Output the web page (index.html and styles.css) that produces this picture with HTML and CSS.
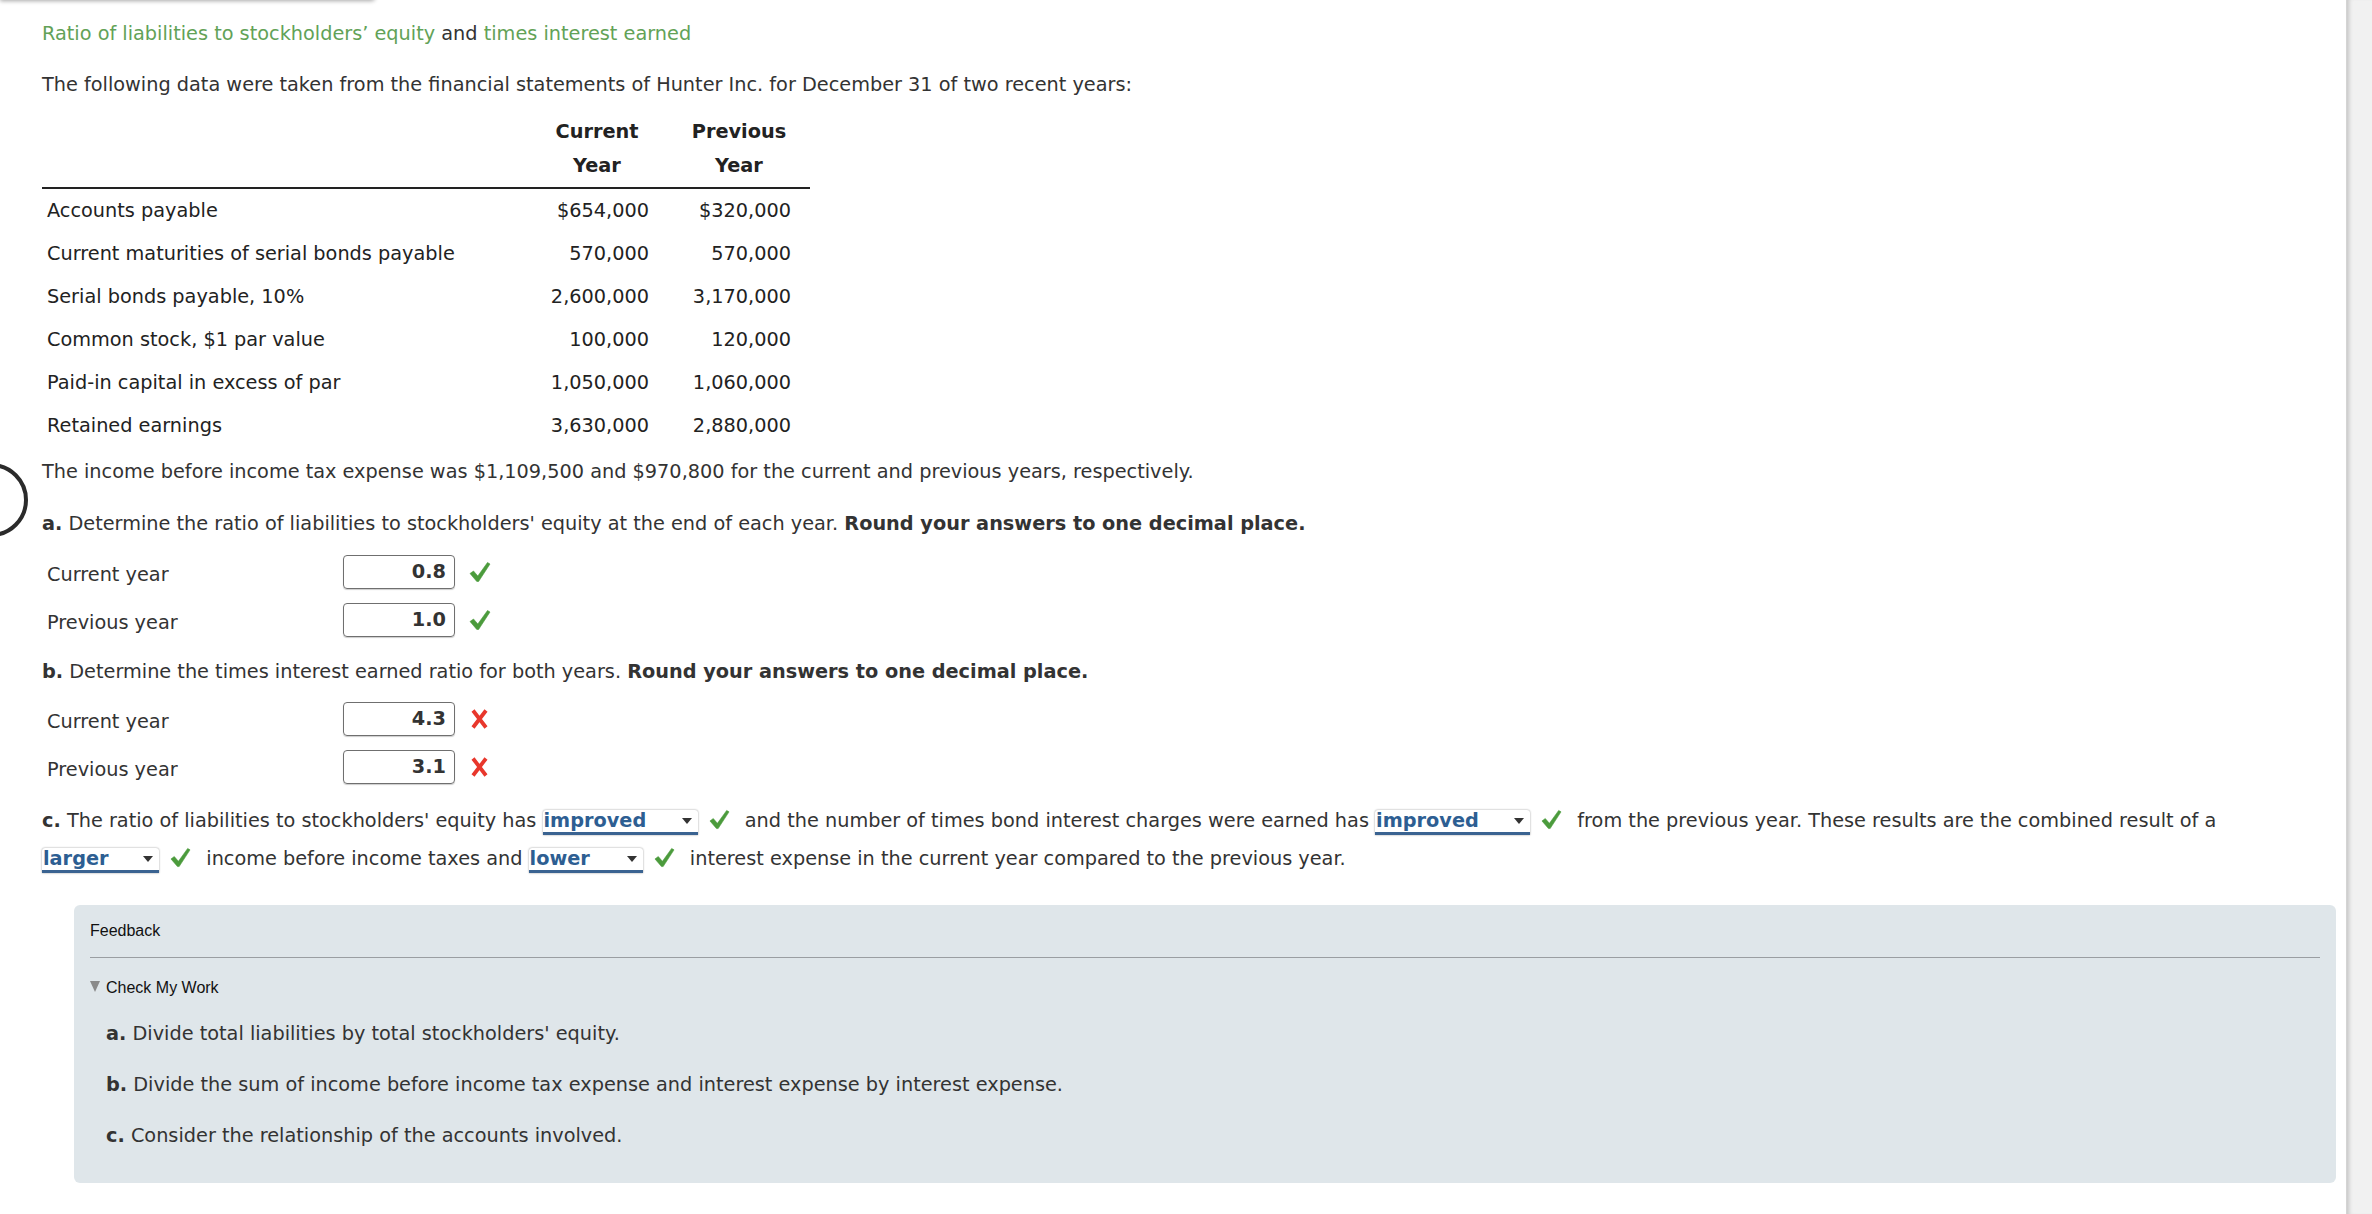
FILE: index.html
```html
<!DOCTYPE html>
<html>
<head>
<meta charset="utf-8">
<link rel="stylesheet" href="styles.css">
</head>
<body>
<div class="page">
  <main class="main">
    <div class="top-shadow"></div>
    <div class="side-circle"></div>
    <p class="title"><span class="green">Ratio of liabilities to stockholders’ equity</span> and <span class="green">times interest earned</span></p>
    <p class="intro">The following data were taken from the financial statements of Hunter Inc. for December 31 of two recent years:</p>
    <table class="data">
      <thead>
        <tr><th class="lbl"></th><th>Current<br>Year</th><th>Previous<br>Year</th></tr>
      </thead>
      <tbody>
        <tr><td class="lbl">Accounts payable</td><td>$654,000</td><td>$320,000</td></tr>
        <tr><td class="lbl">Current maturities of serial bonds payable</td><td>570,000</td><td>570,000</td></tr>
        <tr><td class="lbl">Serial bonds payable, 10%</td><td>2,600,000</td><td>3,170,000</td></tr>
        <tr><td class="lbl">Common stock, $1 par value</td><td>100,000</td><td>120,000</td></tr>
        <tr><td class="lbl">Paid-in capital in excess of par</td><td>1,050,000</td><td>1,060,000</td></tr>
        <tr><td class="lbl">Retained earnings</td><td>3,630,000</td><td>2,880,000</td></tr>
      </tbody>
    </table>
    <p class="income">The income before income tax expense was $1,109,500 and $970,800 for the current and previous years, respectively.</p>
    <p class="q qa"><b>a.</b> Determine the ratio of liabilities to stockholders' equity at the end of each year. <b>Round your answers to one decimal place.</b></p>
    <div class="answers">
      <div class="ans-row"><span class="ans-lbl">Current year</span><span class="ans-box">0.8</span><svg class="mark" viewBox="0 0 22 22"><path class="ok" d="M1 12.5 L4.5 10 L8.8 15 L18.5 1.5 L21 3 L9.6 20.5 L7.8 20.5 Z"/></svg></div>
      <div class="ans-row"><span class="ans-lbl">Previous year</span><span class="ans-box">1.0</span><svg class="mark" viewBox="0 0 22 22"><path class="ok" d="M1 12.5 L4.5 10 L8.8 15 L18.5 1.5 L21 3 L9.6 20.5 L7.8 20.5 Z"/></svg></div>
    </div>
    <p class="q qb"><b>b.</b> Determine the times interest earned ratio for both years. <b>Round your answers to one decimal place.</b></p>
    <div class="answers">
      <div class="ans-row"><span class="ans-lbl">Current year</span><span class="ans-box">4.3</span><svg class="mark" viewBox="0 0 22 22"><path class="bad" d="M4 2.5 L17 19.5 M17 2.5 L4 19.5"/></svg></div>
      <div class="ans-row"><span class="ans-lbl">Previous year</span><span class="ans-box">3.1</span><svg class="mark" viewBox="0 0 22 22"><path class="bad" d="M4 2.5 L17 19.5 M17 2.5 L4 19.5"/></svg></div>
    </div>
    <p class="qc"><b>c.</b> The ratio of liabilities to stockholders' equity has <span class="dd dd-w1"><span class="dd-val">improved</span><span class="dd-arrow"></span></span> <svg class="mark-in" viewBox="0 0 22 22"><path class="ok" d="M1 12.5 L4.5 10 L8.8 15 L18.5 1.5 L21 3 L9.6 20.5 L7.8 20.5 Z"/></svg> and the number of times bond interest charges were earned has <span class="dd dd-w1"><span class="dd-val">improved</span><span class="dd-arrow"></span></span> <svg class="mark-in" viewBox="0 0 22 22"><path class="ok" d="M1 12.5 L4.5 10 L8.8 15 L18.5 1.5 L21 3 L9.6 20.5 L7.8 20.5 Z"/></svg> from the previous year. These results are the combined result of a <span class="dd dd-w2"><span class="dd-val">larger</span><span class="dd-arrow"></span></span> <svg class="mark-in" viewBox="0 0 22 22"><path class="ok" d="M1 12.5 L4.5 10 L8.8 15 L18.5 1.5 L21 3 L9.6 20.5 L7.8 20.5 Z"/></svg> income before income taxes and <span class="dd dd-w3"><span class="dd-val">lower</span><span class="dd-arrow"></span></span> <svg class="mark-in" viewBox="0 0 22 22"><path class="ok" d="M1 12.5 L4.5 10 L8.8 15 L18.5 1.5 L21 3 L9.6 20.5 L7.8 20.5 Z"/></svg> interest expense in the current year compared to the previous year.</p>
    <section class="feedback">
      <div class="fb-head">Feedback</div>
      <div class="fb-toggle"><span class="tri"></span>Check My Work</div>
      <p class="hint"><b>a.</b> Divide total liabilities by total stockholders' equity.</p>
      <p class="hint"><b>b.</b> Divide the sum of income before income tax expense and interest expense by interest expense.</p>
      <p class="hint"><b>c.</b> Consider the relationship of the accounts involved.</p>
    </section>
  </main>
  <div class="scrollbar"></div>
</div>
</body>
</html>
```
FILE: styles.css
```css
html, body {
  margin: 0;
  padding: 0;
  background: #fff;
  height: 1214px;
  overflow: hidden;
}
body {
  font-family: "DejaVu Sans", Verdana, sans-serif;
  font-size: 19.3px;
  color: #333;
}
.page {
  display: flex;
  height: 1214px;
}
.main {
  position: relative;
  flex: 1;
  padding: 19px 10px 0 42px;
  overflow: hidden;
}
.scrollbar {
  width: 25px;
  background: #f1f1f1;
  border-left: 1px solid #d4d4d4;
  box-shadow: inset 5px 0 4px -3px rgba(0,0,0,0.18);
}
.top-shadow {
  position: absolute;
  left: 0;
  top: -20px;
  width: 375px;
  height: 20px;
  background: #fff;
  box-shadow: 0 1px 4px rgba(0,0,0,0.35);
  border-radius: 0 0 4px 0;
}
.side-circle {
  position: absolute;
  left: -46px;
  top: 463px;
  width: 66px;
  height: 66px;
  border: 4px solid #2b2b2b;
  border-radius: 50%;
}
p { margin: 0; }
.title {
  line-height: 30px;
  color: #333;
}
.green { color: #62a257; }
.intro {
  line-height: 30px;
  margin-top: 21px;
}
.data {
  border-collapse: collapse;
  margin-top: 15px;
  width: 768px;
  table-layout: fixed;
}
.data th {
  font-weight: bold;
  text-align: center;
  line-height: 34px;
  padding: 0 0 4px 0;
  border-bottom: 2px solid #222;
  width: 142px;
  color: #222;
}
.data th.lbl { width: auto; }
.data td {
  height: 43px;
  padding: 0 19px 0 0;
  text-align: right;
  vertical-align: middle;
  white-space: nowrap;
  color: #222;
}
.data td.lbl {
  text-align: left;
  padding: 0 0 0 5px;
}
.income {
  line-height: 30px;
  margin-top: 10px;
}
.q { line-height: 30px; }
.qa { margin-top: 22px; }
.qb { margin-top: 13px; }
.q b, .qc b { color: #333; }
.answers { margin-top: 9px; }
.qb + .answers { margin-top: 8px; }
.ans-row {
  display: flex;
  align-items: center;
  height: 48px;
}
.ans-lbl {
  width: 296px;
  padding-left: 5px;
  padding-top: 4px;
}
.ans-box {
  box-sizing: border-box;
  width: 112px;
  height: 34px;
  border: 1.5px solid #6f6f6f;
  border-radius: 4px;
  box-shadow: 0 1px 1px rgba(0,0,0,0.2);
  text-align: right;
  padding-right: 8px;
  font-weight: bold;
  line-height: 31px;
  color: #333;
}
.mark {
  width: 22px;
  height: 22px;
  margin-left: 14px;
}
.ok {
  fill: #4b9b3c;
  stroke: #4b9b3c;
  stroke-width: 0.6;
  stroke-linejoin: round;
}
.bad {
  fill: none;
  stroke: #e8372c;
  stroke-width: 3.8;
  stroke-linecap: butt;
}
.qc {
  line-height: 38px;
  margin-top: 11px;
  padding-right: 12px;
}
.dd {
  display: inline-block;
  position: relative;
  box-sizing: border-box;
  height: 25px;
  line-height: 22px;
  vertical-align: baseline;
  background: #fff;
  border-bottom: 3px solid #3a6391;
  border-radius: 3px 3px 0 0;
  box-shadow: 0 0 2px rgba(0,0,0,0.45);
  color: #2d5e92;
  font-weight: bold;
  padding-left: 1px;
}
.dd-w1 { width: 155px; }
.dd-w2 { width: 117px; }
.dd-w3 { width: 114px; }
.dd-arrow {
  position: absolute;
  right: 6px;
  top: 8px;
  width: 0;
  height: 0;
  border-left: 5px solid transparent;
  border-right: 5px solid transparent;
  border-top: 6px solid #333;
}
.mark-in {
  width: 21px;
  height: 21px;
  vertical-align: -3px;
  margin: 0 9px 0 5px;
}
.feedback {
  margin: 27px 0 0 32px;
  background: #dfe6ea;
  border-radius: 6px;
  padding: 15px 16px 36px 16px;
  height: 278px;
  box-sizing: border-box;
}
.fb-head {
  font-family: "Liberation Sans", Arial, sans-serif;
  font-size: 16px;
  color: #111;
  line-height: 22px;
  padding-bottom: 15px;
  border-bottom: 1.5px solid #9a9ea2;
}
.fb-toggle {
  font-family: "Liberation Sans", Arial, sans-serif;
  font-size: 16px;
  color: #111;
  line-height: 22px;
  margin-top: 19px;
  display: flex;
  align-items: center;
}
.tri {
  width: 0;
  height: 0;
  border-left: 5px solid transparent;
  border-right: 5px solid transparent;
  border-top: 11px solid #8a8a8a;
  margin-right: 6px;
  margin-top: -4px;
}
.hint {
  line-height: 30px;
  margin-left: 16px;
  margin-top: 20px;
}
.hint + .hint { margin-top: 21px; }
```
